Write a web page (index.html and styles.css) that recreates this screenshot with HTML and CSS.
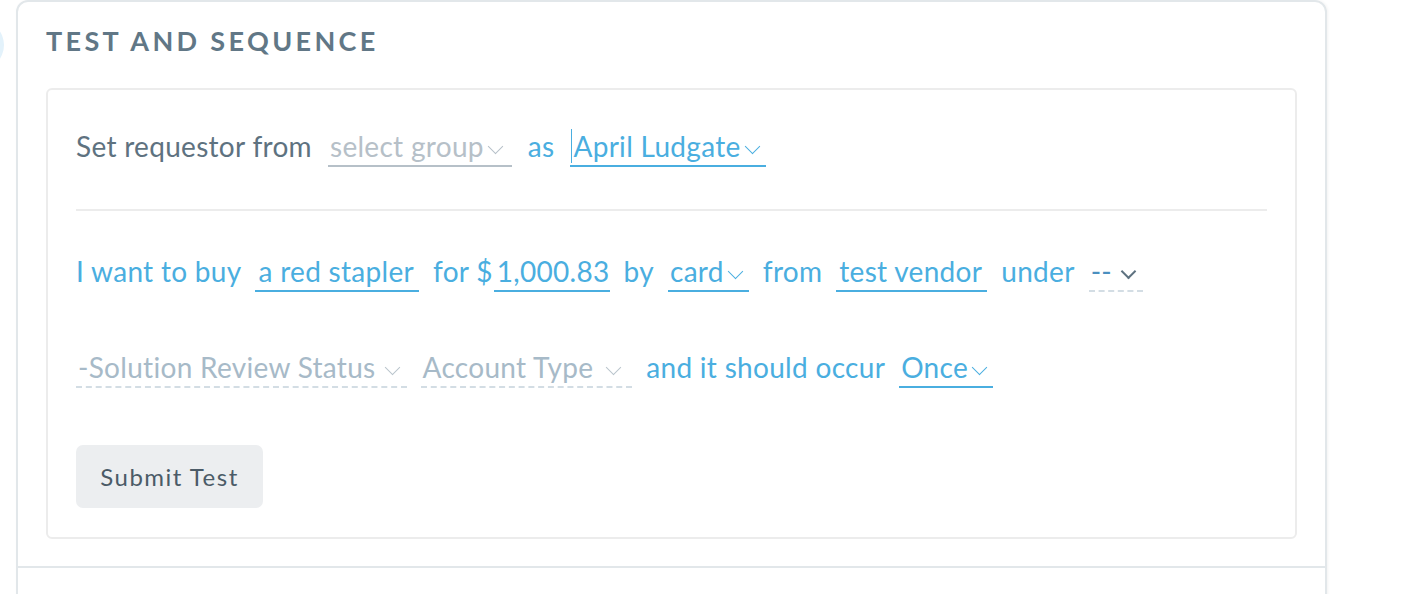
FILE: index.html
```html
<!DOCTYPE html>
<html lang="en">
<head>
    <meta charset="UTF-8">
    <meta name="viewport" content="width=device-width, initial-scale=1.0">
    <title>Test and Sequence</title>
    <link rel="stylesheet" href="styles.css">
</head>
<body>
    <div class="page">
      <div class="step-dot"></div>

      <div class="card">
        <div class="card-section">
          <h2 class="section-title">Test and Sequence</h2>

          <div class="test-box">
            <!-- requestor line -->
            <div class="sentence requestor">
              <span class="word muted">Set requestor from</span>
              <span class="field placeholder">select group<span class="chev"></span></span>
              <span class="word">as</span>
              <span class="field focused"><span class="typed">April Ludgate</span><span class="chev"></span></span>
            </div>

            <!-- purchase line -->
            <div class="sentence">
              <span class="word">I want to buy</span>
              <span class="field text">a red stapler</span>
              <span class="word">for $</span>
              <span class="field text amount">1,000.83</span>
              <span class="word">by</span>
              <span class="field">card<span class="chev"></span></span>
              <span class="word">from</span>
              <span class="field text">test vendor</span>
              <span class="word">under</span>
              <span class="field dashed empty">--<span class="chev dark"></span></span>
            </div>

            <div class="sentence">
              <span class="field dashed faint">-Solution Review Status<span class="chev grey"></span></span>
              <span class="field dashed faint account">Account Type<span class="chev grey"></span></span>
              <span class="word">and it should occur</span>
              <span class="field">Once<span class="chev"></span></span>
            </div>

            <button class="submit-btn" type="button">Submit Test</button>
          </div>
        </div>
      </div>
    </div>
</body>
</html>
```

FILE: styles.css
```css
* {
    margin: 0;
    padding: 0;
    box-sizing: border-box;
}

body {
    background-color: #fff;
    font-family: Lato, "Open Sans", sans-serif;
    overflow: hidden;
}

.page {
    display: flex;
    align-items: flex-start;
}

.step-dot {
    width: 50px;
    height: 50px;
    border-radius: 50%;
    background-color: #e3f2fb;
    margin-left: -46px;
    margin-top: 20px;
    flex-shrink: 0;
}

.card {
    margin-left: 12px;
    width: 1311px;
    height: 620px;
    border: 2px solid #e2e7ea;
    border-radius: 12px;
    box-shadow: 1px 0 3px rgba(0, 0, 0, 0.05);
}

.card-section {
    padding: 22px 28px 27px;
    border-bottom: 2px solid #e2e7ea;
}

.section-title {
    font-size: 27px;
    font-weight: 700;
    letter-spacing: 3.35px;
    text-transform: uppercase;
    color: #617786;
    line-height: 34px;
    margin-bottom: 30px;
}

.test-box {
    border: 2px solid #ececec;
    border-radius: 6px;
    padding: 0 28px 29px;
}

.sentence {
    display: flex;
    align-items: baseline;
    gap: 14px;
    font-size: 28px;
    letter-spacing: 0.3px;
    color: #4aaee0;
    height: 96px;
    padding-top: 41px;
}

.sentence.requestor {
    height: 121px;
    padding-top: 39px;
    gap: 16px;
    border-bottom: 2px solid #ececec;
    margin-bottom: 2px;
}

.word.muted {
    color: #5e7280;
}

.field {
    display: inline-flex;
    align-items: baseline;
    gap: 3px;
    border-bottom: 2px solid #4aaee0;
    padding: 0 3px 2px 2px;
    white-space: nowrap;
}

.field.text {
    padding: 0 5px 2px 3px;
}

.field.amount {
    margin-left: -13px;
    padding-right: 0;
}

.field.placeholder {
    color: #b6c0c8;
    border-bottom-color: #b6c0c8;
    padding-right: 6px;
}

.field.focused {
    padding-left: 1px;
}

/* text cursor sitting in front of the typed value */
.typed {
    border-left: 1px solid #4aaee0;
    padding-left: 1px;
}

.field.dashed {
    border-bottom: 2px dashed #d3dde4;
    padding-right: 4px;
}

.field.empty {
    color: #4a8fbf;
    gap: 8px;
    padding-right: 6px;
}

.field.faint {
    color: #a7bac8;
    gap: 8px;
}

.field.account {
    gap: 12px;
    padding-right: 8px;
}

/* little thin chevron next to each dropdown */
.chev {
    display: inline-block;
    width: 11px;
    height: 11px;
    border-right: 1.5px solid currentColor;
    border-bottom: 1.5px solid currentColor;
    transform: rotate(45deg);
    margin: 0 5px 0 3px;
    position: relative;
    top: -5px;
}

.chev.grey {
    color: #b9c4cc;
}

.chev.dark {
    color: #5e7280;
    border-width: 2px;
    margin-right: 3px;
}

.submit-btn {
    display: block;
    margin-top: 40px;
    width: 187px;
    height: 63px;
    border: none;
    border-radius: 7px;
    background-color: #eceef0;
    color: #4b5b67;
    font-family: Lato, "Open Sans", sans-serif;
    font-size: 24px;
    letter-spacing: 1.5px;
}
```
